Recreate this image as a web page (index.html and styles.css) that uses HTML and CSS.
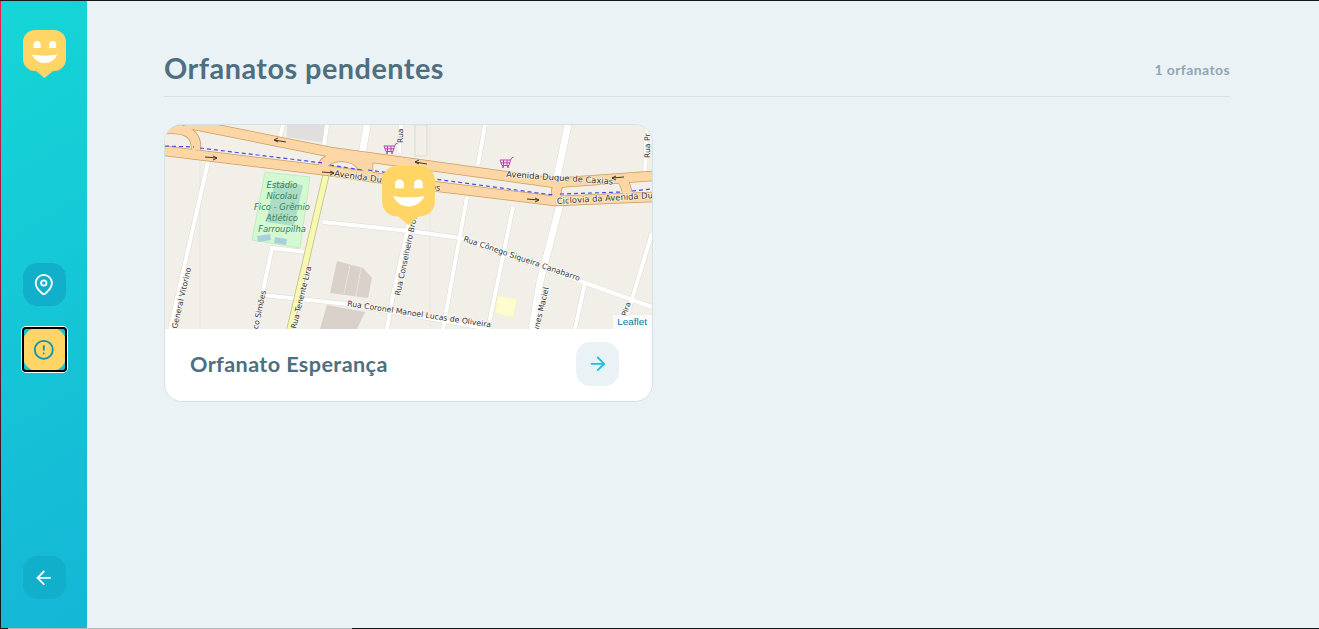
FILE: index.html
```html
<!DOCTYPE html>
<html lang="en">
<head>
    <meta charset="UTF-8">
    <meta name="viewport" content="width=device-width, initial-scale=1.0">
    <title>Orfanatos pendentes</title>
    <link rel="stylesheet" href="styles.css">
</head>
<body>
    <div class="edge-top"></div>
    <div class="page">
        <div class="edge-left"></div>
        <aside class="sidebar">
            <svg class="logo" viewBox="0 0 43 48">
                <path class="happy-body" d="M12 0H31A12 12 0 0 1 43 12V29A12 12 0 0 1 31 41H30L21.5 48L13 41H12A12 12 0 0 1 0 29V12A12 12 0 0 1 12 0Z"/>
                <path class="happy-face" d="M10.5 18V14.5a3.6 3.6 0 0 1 7.2 0V18ZM26 18V14.5a3.6 3.6 0 0 1 7.2 0V18ZM9 24.5C14 26 29 26 34.5 24.5C32 30 27 33 21.7 33C16 33 11.5 30 9 24.5Z"/>
            </svg>
            <nav class="side-nav">
                <button class="side-btn" type="button">
                    <svg class="icon" viewBox="0 0 24 24"><path d="M21 10c0 7-9 13-9 13s-9-6-9-13a9 9 0 0 1 18 0z"/><circle cx="12" cy="10" r="3"/></svg>
                </button>
                <button class="side-btn active" type="button">
                    <svg class="icon" viewBox="0 0 24 24"><circle cx="12" cy="12" r="10"/><line x1="12" y1="8" x2="12" y2="12"/><line x1="12" y1="16" x2="12.01" y2="16"/></svg>
                </button>
            </nav>
            <button class="side-btn" type="button">
                <svg class="icon" viewBox="0 0 24 24"><line x1="19" y1="12" x2="5" y2="12"/><polyline points="12 19 5 12 12 5"/></svg>
            </button>
        </aside>

        <main class="content">
            <header class="content-header">
                <h1>Orfanatos pendentes</h1>
                <span class="count">1 orfanatos</span>
            </header>

            <div class="cards">
                <article class="card">
                    <div class="card-map">
                        <svg class="map" viewBox="165 125 487 204">
                            <rect class="land" x="165" y="125" width="487" height="204"/>

                            <!-- faint boundaries -->
                            <path class="faint" d="M200 160V329M430 125V329"/>

                            <!-- buildings and areas -->
                            <path class="building-light" d="M287 125H325V143L287 137Z"/>
                            <path class="outline" d="M415 125H427V156H415Z"/>
                            <path class="park" d="M265 172L310 177L300 248L252 240Z"/>
                            <path class="pitch" d="M275 182L303 185L294 226L266 222Z"/>
                            <path class="pool" d="M257 236L270 234L271 240L258 242ZM275 237L287 239L286 245L274 243Z"/>
                            <path class="building" d="M337 261L363 268L372 278L368 298L330 293Z"/>
                            <path class="building" d="M327 305L365 312L357 329H320Z"/>
                            <path class="yellow-lot" d="M498 296L517 300L513 317L495 313Z"/>
                            <path class="block-lines" d="M350 265L344 294M361 268L356 296"/>

                            <!-- streets -->
                            <g class="street-case">
                                <path d="M208 162L170 329M283 125L280 137M327 125L324 146M401 125L399 153M485 125L478 165M647 125L645 173"/>
                                <path d="M467 197L443 329M513 207L488 329M585 283L575 329M652 233L623 329"/>
                                <path d="M323 222L410 231L460 238L583 282L652 307M262 295L347 304L490 329M306 252L272 248L262 295"/>
                                <path d="M413 205L393 295L387 329"/>
                            </g>
                            <g class="street">
                                <path d="M208 162L170 329M283 125L280 137M327 125L324 146M401 125L399 153M485 125L478 165M647 125L645 173"/>
                                <path d="M467 197L443 329M513 207L488 329M585 283L575 329M652 233L623 329"/>
                                <path d="M323 222L410 231L460 238L583 282L652 307M262 295L347 304L490 329M306 252L272 248L262 295"/>
                                <path d="M413 205L393 295L387 329"/>
                            </g>
                            <path class="street-wide-case" d="M568 125L556 182M560 204L540 282L532 329M367 125L362 155"/>
                            <path class="street-wide" d="M568 125L556 182M560 204L540 282L532 329M367 125L362 155"/>
                            <path class="tertiary-case" d="M326 175L290 329"/>
                            <path class="tertiary" d="M326 175L290 329"/>

                            <!-- avenue -->
                            <g class="avenue-case">
                                <path d="M185 123L330 152L410 163L555 183L652 176"/>
                                <path d="M165 151L330 171L440 187L555 201L652 197"/>
                                <path d="M165 129C188 127 197 135 196 150"/>
                                <path d="M323 166C326 154 358 152 363 170"/>
                                <path d="M368 160L368 176"/>
                                <path d="M556 197C556 187 558 184 562 182M620 177C625 182 627 190 628 197"/>
                            </g>
                            <g class="avenue">
                                <path d="M185 123L330 152L410 163L555 183L652 176"/>
                                <path d="M165 151L330 171L440 187L555 201L652 197"/>
                                <path d="M165 129C188 127 197 135 196 150"/>
                                <path d="M323 166C326 154 358 152 363 170"/>
                                <path d="M368 160L368 176"/>
                                <path d="M556 197C556 187 558 184 562 182M620 177C625 182 627 190 628 197"/>
                            </g>
                            <path class="cycleway" d="M165 146L194 147M200 148L323 163M330 165L362 170M368 170L553 195M560 194L623 192M632 191L652 189"/>

                            <!-- one way arrows -->
                            <path class="oneway" d="M274 140L286 142M274 140L278 138M274 140L278 142M205 157L217 158M217 158L213 156M217 158L213 160M322 172L334 173M334 173L330 171M334 173L330 175M415 162L427 164M415 162L419 160M415 162L419 164M527 199L539 200M539 200L535 198M539 200L535 202M612 178L624 177M612 178L616 176M612 178L616 180"/>

                            <!-- shops -->
                            <g class="cart">
                                <path d="M384 146H394.5L393 151.5H386ZM394.5 146L396 143.5H397.5M387.5 146V151.5M391 146V151.5M385 148.8H394"/>
                                <circle cx="387" cy="153" r="0.7"/><circle cx="392" cy="153" r="0.7"/>
                            </g>
                            <g class="cart">
                                <path d="M500 160H510.5L509 165.5H502ZM510.5 160L512 157.5H513.5M503.5 160V165.5M507 160V165.5M501 162.8H510"/>
                                <circle cx="503" cy="167" r="0.7"/><circle cx="508" cy="167" r="0.7"/>
                            </g>

                            <!-- labels -->
                            <text class="label" transform="translate(334 176) rotate(8)">Avenida Duque de Caxias</text>
                            <text class="label" transform="translate(506 177) rotate(4)">Avenida Duque de Caxias</text>
                            <text class="label" transform="translate(557 204) rotate(-3.5)">Ciclovia da Avenida Duque</text>
                            <text class="label small" transform="translate(296 329) rotate(-76)">Rua Tenente Lira</text>
                            <text class="label small" transform="translate(177 329) rotate(-77)">General Vitorino</text>
                            <text class="label small end" transform="translate(266 291) rotate(-78)">Francisco Simões</text>
                            <text class="label small" transform="translate(347 306) rotate(8.5)">Rua Coronel Manoel Lucas de Oliveira</text>
                            <text class="label small" transform="translate(463 241) rotate(19)">Rua Cônego Siqueira Canabarro</text>
                            <text class="label small" transform="translate(400 296) rotate(-78)">Rua Conselheiro Brotero</text>
                            <text class="label small" transform="translate(403 143) rotate(-90)">Rua</text>
                            <text class="label small" transform="translate(650 158) rotate(-90)">Rua Pr</text>
                            <text class="label small end" transform="translate(549 288) rotate(-76)">Nunes Maciel</text>
                            <text class="label small end" transform="translate(631 303) rotate(-72)">Pira</text>
                            <text class="park-label" x="282" y="188">Estádio</text>
                            <text class="park-label" x="282" y="199">Nicolau</text>
                            <text class="park-label" x="282" y="210">Fico - Grêmio</text>
                            <text class="park-label" x="282" y="221">Atlético</text>
                            <text class="park-label" x="282" y="232">Farroupilha</text>
                        </svg>
                        <svg class="marker" viewBox="0 0 43 48">
                            <path class="happy-body" d="M12 0H31A12 12 0 0 1 43 12V29A12 12 0 0 1 31 41H30L21.5 48L13 41H12A12 12 0 0 1 0 29V12A12 12 0 0 1 12 0Z"/>
                            <path class="happy-face" d="M10.5 18V14.5a3.6 3.6 0 0 1 7.2 0V18ZM26 18V14.5a3.6 3.6 0 0 1 7.2 0V18ZM9 24.5C14 26 29 26 34.5 24.5C32 30 27 33 21.7 33C16 33 11.5 30 9 24.5Z"/>
                        </svg>
                        <span class="attribution">Leaflet</span>
                    </div>
                    <div class="card-footer">
                        <h2>Orfanato Esperança</h2>
                        <button class="card-btn" type="button">
                            <svg class="icon" viewBox="0 0 24 24"><line x1="5" y1="12" x2="19" y2="12"/><polyline points="12 5 19 12 12 19"/></svg>
                        </button>
                    </div>
                </article>
            </div>
        </main>
    </div>
    <div class="edge-bottom"><div class="edge-bottom-bar"></div></div>
</body>
</html>
```

FILE: styles.css
```css
* {
    box-sizing: border-box;
}

body {
    font-family: "Lato", "Noto Sans", sans-serif;
    margin: 0;
    height: 100vh;
    overflow: hidden;
    display: flex;
    flex-direction: column;
    background-color: #ebf2f5;
}

button {
    border: 0;
    padding: 0;
    cursor: pointer;
    display: flex;
    align-items: center;
    justify-content: center;
}

h1, h2 {
    margin: 0;
    color: #4d6f80;
}

/* window edges of the capture */
.edge-top {
    height: 1px;
    flex-shrink: 0;
    background-color: #14171a;
}

.edge-left {
    width: 1px;
    flex-shrink: 0;
    background: linear-gradient(180deg, #e8234f 0%, #8f1436 45%, #15181a 85%);
}

.edge-bottom {
    height: 1px;
    flex-shrink: 0;
    background-color: #14171a;
    padding-left: 8px;
}

.edge-bottom-bar {
    width: 344px;
    height: 1px;
    background-color: #b4b8ba;
}

.page {
    flex: 1;
    display: flex;
    min-height: 0;
}

/* sidebar */
.sidebar {
    width: 86px;
    flex-shrink: 0;
    padding: 29px 0 29px 0.5px;
    display: flex;
    flex-direction: column;
    align-items: center;
    justify-content: space-between;
    background: linear-gradient(329.54deg, #15b6d6 0%, #15d6d6 100%);
}

.logo {
    width: 43px;
    height: 48px;
    display: block;
}

.happy-body {
    fill: #ffd666;
}

.happy-face {
    fill: #ffffff;
}

.side-nav {
    display: flex;
    flex-direction: column;
    gap: 21.6px;
}

.side-btn {
    position: relative;
    width: 43.2px;
    height: 43.2px;
    border-radius: 14.4px;
    background-color: #12afcb;
    color: #ffffff;
}

.side-btn.active {
    background-color: #ffd666;
    color: #0f8fb0;
}

.side-btn.active::after {
    content: "";
    position: absolute;
    inset: -1px;
    border: 2px solid #000000;
    border-radius: 4px;
    box-shadow: 0 0 0 1px #ffffff;
}

.icon {
    width: 21.6px;
    height: 21.6px;
    fill: none;
    stroke: currentColor;
    stroke-width: 2;
    stroke-linecap: round;
    stroke-linejoin: round;
}

/* content */
.content {
    flex: 1;
    min-width: 0;
    padding: 0 89px 0 77px;
}

.content-header {
    height: 96px;
    padding: 0 0 8px;
    display: flex;
    align-items: flex-end;
    justify-content: space-between;
    border-bottom: 1px solid #d3e2e5;
}

.content-header h1 {
    font-size: 28.8px;
    font-weight: 700;
    letter-spacing: 0.5px;
    line-height: 40px;
}

.count {
    font-size: 14px;
    font-weight: 700;
    letter-spacing: 0.4px;
    line-height: 36px;
    color: #8fa7b2;
}

.cards {
    padding-top: 27px;
}

.card {
    width: 489px;
    height: 278px;
    background-color: #ffffff;
    border: 1px solid #d3e2e5;
    border-radius: 18px;
    overflow: hidden;
}

.card-map {
    position: relative;
    height: 204px;
}

.map {
    display: block;
    width: 487px;
    height: 204px;
}

.marker {
    position: absolute;
    left: 217px;
    top: 41px;
    width: 53px;
    height: 59px;
}

.attribution {
    position: absolute;
    right: 0;
    bottom: 0;
    padding: 0 5px 0 4px;
    height: 14px;
    font-family: "Liberation Sans", sans-serif;
    font-size: 9.9px;
    line-height: 14px;
    color: #0078a8;
    background-color: rgba(255, 255, 255, 0.7);
}

.card-footer {
    height: 72px;
    padding: 0 33px 2px 25px;
    display: flex;
    align-items: center;
    justify-content: space-between;
}

.card-footer h2 {
    font-size: 21.6px;
    font-weight: 700;
    letter-spacing: 0.4px;
}

.card-btn {
    width: 43.2px;
    height: 43.2px;
    border-radius: 14.4px;
    background-color: #ebf2f5;
    color: #15c3d6;
}

/* map drawing */
.land { fill: #f2efe9; }
.faint { fill: none; stroke: #e9e5de; stroke-width: 1; }
.building-light { fill: #e0dfdd; }
.outline { fill: none; stroke: #dcd9d3; stroke-width: 1; }
.park { fill: #d3f8d2; stroke: #bfeebd; stroke-width: 1; }
.pitch { fill: #aadcc6; }
.pool { fill: #a9cfdd; }
.building { fill: #d9d0c9; }
.block-lines { fill: none; stroke: #e8e4df; stroke-width: 1; }
.yellow-lot { fill: #fffdd0; stroke: #f8f5c4; stroke-width: 1; }

.street-case path,
.street path,
.street-wide-case,
.street-wide,
.tertiary-case,
.tertiary,
.avenue-case path,
.avenue path,
.cycleway,
.oneway,
.cart {
    fill: none;
}

.street-case path { stroke: #dedad3; stroke-width: 5px; }
.street path { stroke: #ffffff; stroke-width: 4px; }
.street-wide-case { stroke: #dedad3; stroke-width: 8px; }
.street-wide { stroke: #ffffff; stroke-width: 7px; }
.tertiary-case { stroke: #b9bb80; stroke-width: 7px; }
.tertiary { stroke: #f7f8b0; stroke-width: 5.5px; }
.avenue-case path { stroke: #c89f60; stroke-width: 10.5px; }
.avenue path { stroke: #fcd6a4; stroke-width: 9px; }
.cycleway { stroke: #4a4aee; stroke-width: 1.2px; stroke-dasharray: 4 3; }
.oneway { stroke: #3d3426; stroke-width: 1px; }
.cart { stroke: #b545b5; stroke-width: 1px; }

.label {
    font-family: "DejaVu Sans", sans-serif;
    font-size: 8.4px;
    fill: #333333;
    stroke: #ffffff;
    stroke-width: 1.5px;
    stroke-opacity: 0.7;
    paint-order: stroke;
}

.label.small {
    font-size: 7.7px;
}

.label.end {
    text-anchor: end;
}

.park-label {
    font-family: "DejaVu Sans", sans-serif;
    font-size: 8.4px;
    font-style: italic;
    text-anchor: middle;
    fill: #3a8058;
}
```
